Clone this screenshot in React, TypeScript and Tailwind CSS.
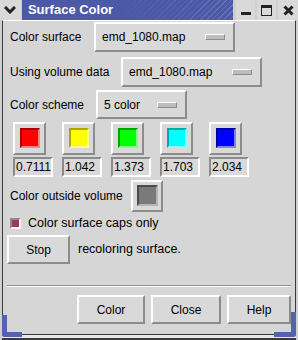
import type { ReactNode } from 'react'

const font = { fontFamily: '"Liberation Sans", Arial, Helvetica, sans-serif' }

const raised = 'border-2 border-t-white border-l-white border-b-[#8c8c8c] border-r-[#8c8c8c]'
const sunken = 'border-2 border-t-[#8c8c8c] border-l-[#8c8c8c] border-b-white border-r-white'

function MenuButton({ label, w, h }: { label: string; w: number; h: number }) {
  return (
    <div
      className={`flex items-center justify-between bg-[#d9d9d9] pl-[6px] pr-[8px] ${raised}`}
      style={{ width: w, height: h }}
    >
      <span className="text-[12px] text-black">{label}</span>
      <span className="h-[6px] w-[20px] border border-t-white border-l-white border-b-[#8c8c8c] border-r-[#8c8c8c] bg-[#bdbdbd]" />
    </div>
  )
}

function Swatch({ fill, dark, light }: { fill: string; dark: string; light: string }) {
  return (
    <div className={`flex h-[33px] w-[33px] items-start justify-center bg-[#d9d9d9] pt-[4px] ${raised}`}>
      <div
        className="h-[20px] w-[20px] border-2"
        style={{
          background: fill,
          borderTopColor: dark,
          borderLeftColor: dark,
          borderBottomColor: light,
          borderRightColor: light,
        }}
      />
    </div>
  )
}

function Entry({ value }: { value: string }) {
  return (
    <div className={`flex h-[20px] w-[40px] items-center overflow-hidden bg-[#d9d9d9] pl-[1px] ${sunken}`}>
      <span className="whitespace-nowrap text-[12px] leading-none text-black">{value}</span>
    </div>
  )
}

function PushButton({ children, w }: { children: ReactNode; w: number }) {
  return (
    <div
      className={`flex h-[29px] items-center justify-center bg-[#d9d9d9] text-[12px] text-black ${raised}`}
      style={{ width: w }}
    >
      {children}
    </div>
  )
}

const swatches = [
  { fill: '#ff0000', dark: '#a00000', light: '#ff8080', value: '0.7111' },
  { fill: '#ffff00', dark: '#a8a800', light: '#ffff90', value: '1.042' },
  { fill: '#00ff00', dark: '#00a000', light: '#80ff80', value: '1.373' },
  { fill: '#00ffff', dark: '#00a8a8', light: '#90ffff', value: '1.703' },
  { fill: '#0000ff', dark: '#0000a0', light: '#8080ff', value: '2.034' },
]

export default function App() {
  return (
    <div className="relative flex h-[340px] w-[298px] flex-col bg-[#cfcfcf]" style={font}>
      {/* title bar */}
      <div className="flex h-[20px] items-stretch">
        <div className="flex w-[21px] items-center justify-center bg-[#d9d9d9]">
          <svg width="12" height="8" viewBox="0 0 12 8">
            <path d="M1 1 L6 6 L11 1" stroke="#222" strokeWidth="3" fill="none" />
          </svg>
        </div>
        <div className="ml-[1px] flex w-[212px] items-center bg-[linear-gradient(90deg,#4b59a6_45%,rgba(75,89,166,0)_100%),repeating-linear-gradient(135deg,#6673b8_0px,#6673b8_1px,#4b59a6_1px,#4b59a6_4px)] pl-[6px]">
          <span className="text-[13px] font-bold text-white">Surface Color</span>
        </div>
        <div className="ml-[3px] flex w-[19px] items-end justify-center bg-[#d9d9d9] pb-[5px]">
          <div className="h-[3px] w-[10px] bg-[#222]" />
        </div>
        <div className="ml-[2px] flex w-[19px] items-center justify-center bg-[#d9d9d9]">
          <div className="h-[11px] w-[11px] border border-t-[3px] border-[#222]" />
        </div>
        <div className="ml-[2px] flex w-[20px] items-center justify-center bg-[#d9d9d9]">
          <svg width="11" height="11" viewBox="0 0 11 11">
            <path d="M1.5 1.5 L9.5 9.5 M9.5 1.5 L1.5 9.5" stroke="#222" strokeWidth="3" />
          </svg>
        </div>
      </div>

      {/* body */}
      <div className="mx-[2px] flex flex-1 flex-col border-x border-x-[#3a3a3a] border-t border-t-white bg-[#d6d6d6] text-[12px] text-black">
        <div className="flex items-center pl-[7px] pt-[1px]">
          <span className="w-[84px]">Color surface</span>
          <MenuButton label="emd_1080.map" w={141} h={30} />
        </div>
        <div className="mt-[5px] flex items-center pl-[7px]">
          <span className="w-[111px]">Using volume data</span>
          <MenuButton label="emd_1080.map" w={141} h={30} />
        </div>
        <div className="mt-[3px] flex items-center pl-[7px]">
          <span className="w-[86px]">Color scheme</span>
          <MenuButton label="5 color" w={91} h={29} />
        </div>

        <div className="mt-[3px] flex gap-[9px] pl-[10px]">
          {swatches.map((s) => (
            <div key={s.value} className="flex flex-col gap-[2px]">
              <Swatch fill={s.fill} dark={s.dark} light={s.light} />
              <Entry value={s.value} />
            </div>
          ))}
        </div>

        <div className="mt-[3px] flex items-center pl-[7px]">
          <span className="w-[121px]">Color outside volume</span>
          <div className={`flex h-[32px] w-[32px] items-start justify-center bg-[#d9d9d9] pt-[3px] ${raised}`}>
            <div className="h-[21px] w-[21px] border-2 border-t-[#4a4a4a] border-l-[#4a4a4a] border-b-[#b4b4b4] border-r-[#b4b4b4] bg-[#7a7a7a]" />
          </div>
        </div>

        <div className="mt-[3px] flex h-[16px] items-center pl-[7px]">
          <div className="h-[11px] w-[11px] border-2 border-t-[#8c8c8c] border-l-[#8c8c8c] border-b-white border-r-white bg-[#b03060]" />
          <span className="ml-[7px] text-[12.5px]">Color surface caps only</span>
        </div>

        <div className="mt-[4px] flex items-center pl-[4px]">
          <PushButton w={63}>Stop</PushButton>
          <span className="ml-[8px] text-[12.5px]">recoloring surface.</span>
        </div>

        <div className="mx-[4px] mt-[21px] border-t border-t-[#8c8c8c] border-b border-b-white" />

        <div className="mt-[8px] flex justify-end gap-[6px] pr-[4px]">
          <PushButton w={68}>Color</PushButton>
          <PushButton w={70}>Close</PushButton>
          <PushButton w={64}>Help</PushButton>
        </div>
      </div>

      {/* bottom frame */}
      <div className="mx-[2px] h-[6px] border-b-2 border-b-[#3a3a3a] border-t border-t-[#3a3a3a] bg-[#e8e8e8]" />

      {/* window corner handles */}
      <div className="absolute bottom-[3px] left-[2px] h-[22px] w-[5px] rounded-bl-[3px] bg-[#5562ad]" />
      <div className="absolute bottom-[3px] left-[2px] h-[5px] w-[20px] rounded-bl-[3px] bg-[#5562ad]" />
      <div className="absolute bottom-[3px] right-[2px] h-[25px] w-[5px] rounded-br-[3px] bg-[#5562ad]" />
      <div className="absolute bottom-[3px] right-[2px] h-[5px] w-[22px] rounded-br-[3px] bg-[#5562ad]" />
    </div>
  )
}
